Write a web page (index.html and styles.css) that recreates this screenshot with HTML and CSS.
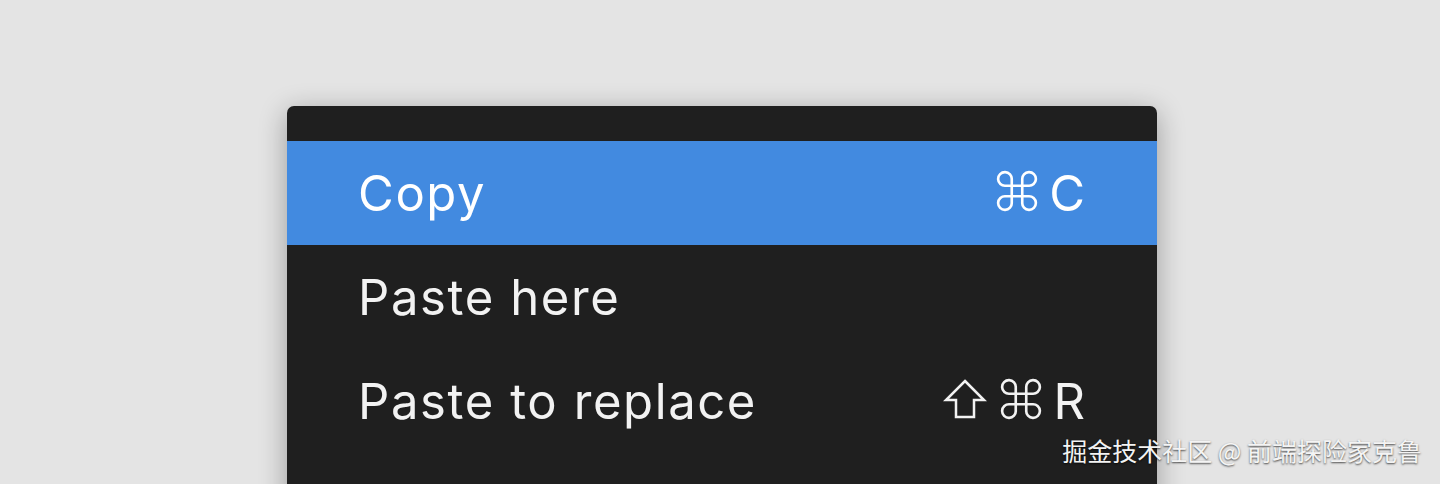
FILE: index.html
```html
<!DOCTYPE html>
<html lang="en">
<head>
    <meta charset="UTF-8">
    <title>Context menu</title>
    <link rel="stylesheet" href="styles.css">
</head>
<body>
    <div class="menu">
        <div class="menu-item active">
            <span class="label">Copy</span>
            <span class="keys">
                <svg class="key-icon" viewBox="0 0 40 40"><path d="M15 15V9A6.5 6.5 0 1 0 9 15H31A6.5 6.5 0 1 0 25 9V31A6.5 6.5 0 1 0 31 25H9A6.5 6.5 0 1 0 15 31V15Z"/></svg>
                C
            </span>
        </div>
        <div class="menu-item">
            <span class="label">Paste here</span>
        </div>
        <div class="menu-item">
            <span class="label">Paste to replace</span>
            <span class="keys">
                <svg class="key-icon shift" viewBox="0 0 44 40"><path d="M22 2L41 21H31V38H13V21H3Z"/></svg>
                <svg class="key-icon" viewBox="0 0 40 40"><path d="M15 15V9A6.5 6.5 0 1 0 9 15H31A6.5 6.5 0 1 0 25 9V31A6.5 6.5 0 1 0 31 25H9A6.5 6.5 0 1 0 15 31V15Z"/></svg>
                R
            </span>
        </div>
        <div class="menu-item">
            <span class="label">Copy/Paste as</span>
        </div>
    </div>
    <div class="watermark">掘金技术社区 @ 前端探险家克鲁</div>
</body>
</html>
```

FILE: styles.css
```css
html, body {
    margin: 0;
    height: 100%;
    overflow: hidden;
}
body {
    background: #e4e4e4;
    font-family: Inter, "Noto Sans", sans-serif;
    padding: 106px 0 0 287px;
    box-sizing: border-box;
}
.menu {
    width: 870px;
    background: #1f1f1f;
    border-radius: 7px 7px 0 0;
    padding-top: 35px;
    box-shadow: 0 6px 28px rgba(0,0,0,0.32);
}
.menu-item {
    height: 104px;
    display: flex;
    align-items: center;
    justify-content: space-between;
    padding: 0 72px 0 71px;
    color: #f2f2f2;
    font-size: 49px;
    letter-spacing: 1.6px;
    line-height: 1;
}
.menu-item.active {
    background: #428ae0;
    color: #fff;
}
.keys {
    display: flex;
    align-items: center;
    gap: 11px;
    letter-spacing: 0;
}
.key-icon {
    width: 42px;
    height: 42px;
    margin-top: -4px;
    fill: none;
    stroke: currentColor;
    stroke-width: 2.5;
}
.key-icon.shift {
    width: 44px;
    margin-right: 2px;
}
.watermark {
    position: absolute;
    right: 18px;
    bottom: 16px;
    font-family: "Noto Sans CJK SC", sans-serif;
    font-size: 25px;
    color: #f4f4f4;
    text-shadow: 0 1px 2px rgba(0,0,0,0.7);
}
```
